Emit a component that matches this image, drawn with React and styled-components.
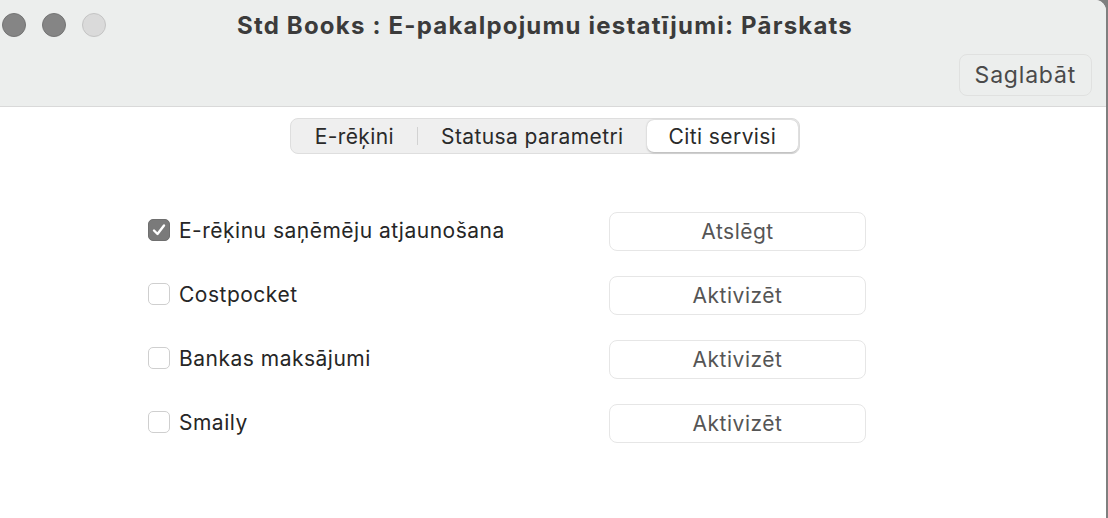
import React from 'react';
import styled, { createGlobalStyle } from 'styled-components';

const GlobalStyle = createGlobalStyle`
  html, body {
    margin: 0;
    padding: 0;
    background: #7f7f7f;
  }
  body {
    font-family: Inter, "Noto Sans", "Liberation Sans", sans-serif;
  }
`;

const Window = styled.div`
  width: 1106px;
  height: 518px;
  background: #ffffff;
  border-top-right-radius: 11px;
  overflow: hidden;
  display: flex;
  flex-direction: column;
`;

const TitleBar = styled.header`
  height: 106px;
  background: #eceeed;
  border-bottom: 1px solid #d9d9d9;
  display: flex;
  flex-direction: column;
  flex-shrink: 0;
`;

const TopRow = styled.div`
  height: 50px;
  position: relative;
  display: flex;
  align-items: center;
  justify-content: center;
`;

const Lights = styled.div`
  position: absolute;
  left: 2px;
  top: 13px;
  display: flex;
  gap: 16px;
`;

const Light = styled.span`
  width: 24px;
  height: 24px;
  border-radius: 50%;
  box-sizing: border-box;
  background: ${({ $off }) => ($off ? '#dadada' : '#858585')};
  border: 1px solid ${({ $off }) => ($off ? '#c4c4c4' : '#747474')};
`;

const Title = styled.h1`
  margin: 0;
  font-size: 24px;
  font-weight: 700;
  color: #3b3b3b;
  letter-spacing: 1.2px;
  transform: translateX(-8px);
`;

const ToolRow = styled.div`
  display: flex;
  justify-content: flex-end;
  padding: 4px 14px 0 0;
`;

const ToolButton = styled.button`
  height: 42px;
  padding: 0 15px;
  border: 1.5px solid #e0e1e0;
  border-radius: 8px;
  background: #eceeed;
  font-family: inherit;
  font-size: 23px;
  letter-spacing: 0.8px;
  color: #4a4a4a;
`;

const Content = styled.main`
  flex: 1;
  display: flex;
  flex-direction: column;
  align-items: center;
  padding-top: 11px;
`;

const Segmented = styled.div`
  display: flex;
  align-items: center;
  height: 36px;
  box-sizing: border-box;
  padding: 1px;
  background: #efefef;
  border: 1px solid #dedede;
  border-radius: 8px;
  transform: translateX(-8px);
`;

const Segment = styled.div`
  height: 100%;
  display: flex;
  align-items: center;
  box-sizing: border-box;
  padding: 0 ${({ $pad }) => $pad}px;
  font-size: 21px;
  letter-spacing: 0.4px;
  color: #2a2a2a;
  border-radius: 7px;
  background: ${({ $active }) => ($active ? '#ffffff' : 'transparent')};
  box-shadow: ${({ $active }) => ($active ? '0 0.5px 2px rgba(0,0,0,0.25)' : 'none')};
`;

const Divider = styled.span`
  width: 1px;
  height: 18px;
  background: #d2d2d2;
`;

const Rows = styled.div`
  width: 718px;
  margin-top: 58px;
  display: flex;
  flex-direction: column;
  gap: 26px;
  transform: translateX(-46px);
`;

const Row = styled.div`
  display: flex;
  align-items: center;
  justify-content: space-between;
  height: 38px;
`;

const Label = styled.label`
  display: flex;
  align-items: center;
  gap: 9px;
  font-size: 21px;
  letter-spacing: 0.5px;
  color: #262626;
  margin-top: -2px;
`;

const Box = styled.span`
  width: 22px;
  height: 22px;
  box-sizing: border-box;
  border-radius: 5px;
  display: flex;
  align-items: center;
  justify-content: center;
  background: ${({ $checked }) => ($checked ? '#7a7a7a' : '#ffffff')};
  border: 1px solid ${({ $checked }) => ($checked ? '#6f6f6f' : '#cfcfcf')};
`;

const ActionButton = styled.button`
  width: 257px;
  height: 39px;
  border: 1.5px solid #e6e6e6;
  border-radius: 8px;
  background: #ffffff;
  font-family: inherit;
  font-size: 21px;
  letter-spacing: 0.5px;
  color: #555555;
`;

const services = [
  { name: 'E-rēķinu saņēmēju atjaunošana', on: true },
  { name: 'Costpocket', on: false },
  { name: 'Bankas maksājumi', on: false },
  { name: 'Smaily', on: false },
];

const Check = () => (
  <svg width="16" height="16" viewBox="0 0 16 16">
    <path d="M3 8.5 L6.5 12 L13 3.5" fill="none" stroke="#fff" strokeWidth="2.4" strokeLinecap="round" strokeLinejoin="round" />
  </svg>
);

export default function App() {
  return (
    <>
      <GlobalStyle />
      <Window>
        <TitleBar>
          <TopRow>
            <Lights>
              <Light />
              <Light />
              <Light $off />
            </Lights>
            <Title>Std Books : E-pakalpojumu iestatījumi: Pārskats</Title>
          </TopRow>
          <ToolRow>
            <ToolButton>Saglabāt</ToolButton>
          </ToolRow>
        </TitleBar>
        <Content>
          <Segmented>
            <Segment $pad={23}>E-rēķini</Segment>
            <Divider />
            <Segment $pad={23}>Statusa parametri</Segment>
            <Segment $pad={22} $active>Citi servisi</Segment>
          </Segmented>
          <Rows>
            {services.map((s) => (
              <Row key={s.name}>
                <Label>
                  <Box $checked={s.on}>{s.on && <Check />}</Box>
                  {s.name}
                </Label>
                <ActionButton>{s.on ? 'Atslēgt' : 'Aktivizēt'}</ActionButton>
              </Row>
            ))}
          </Rows>
        </Content>
      </Window>
    </>
  );
}
